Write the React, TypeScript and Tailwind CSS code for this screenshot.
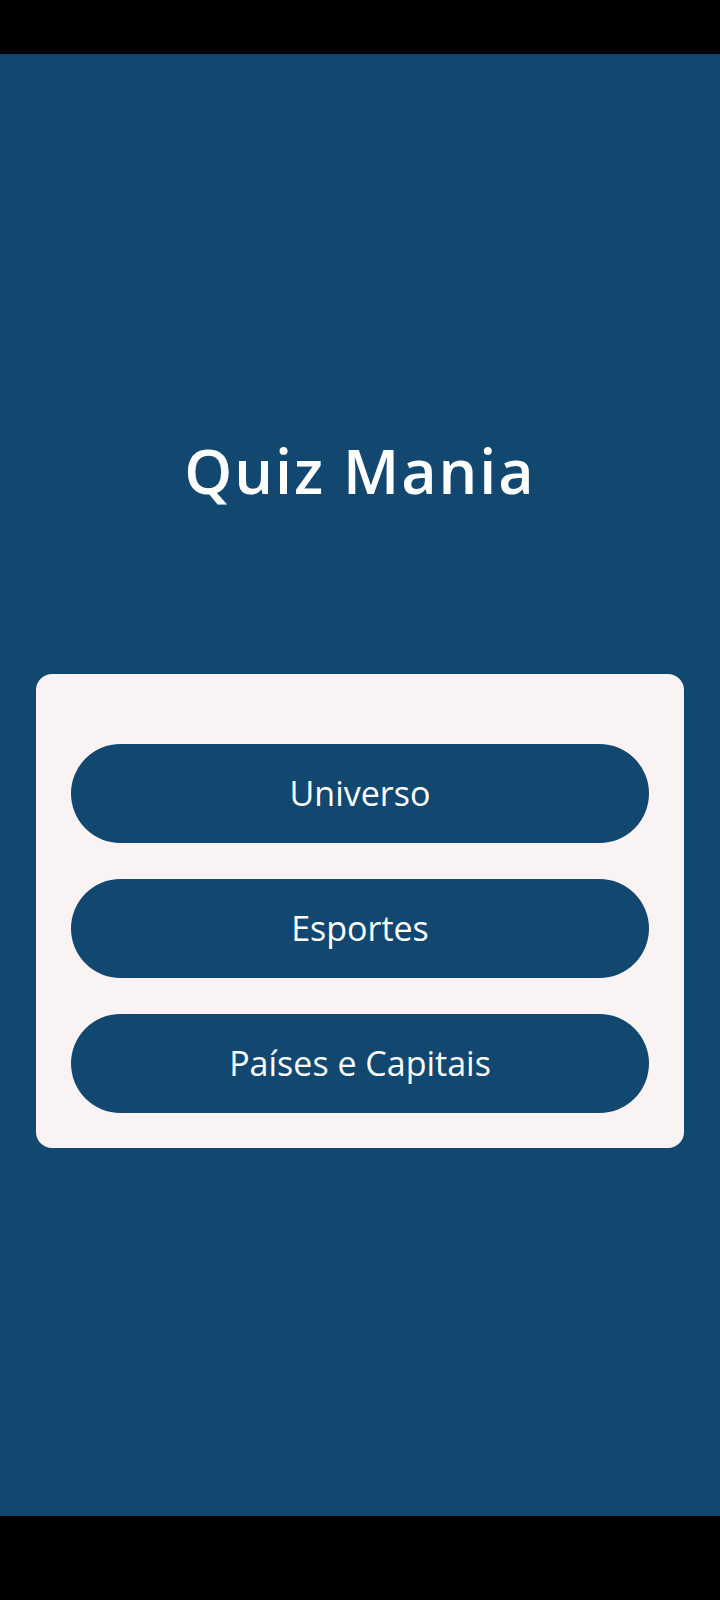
const categories = ['Universo', 'Esportes', 'Países e Capitais'];

export default function App() {
  return (
    <div className="w-[720px] h-[1600px] flex flex-col bg-black" style={{ fontFamily: '"Open Sans", sans-serif' }}>
      <div className="h-[54px] bg-black" />

      <main className="h-[1462px] bg-[#12476f] flex flex-col items-center">
        <h1 className="mt-[386px] text-[61px] leading-[61px] font-semibold tracking-[2px] text-white">Quiz Mania</h1>

        <div className="mt-[173px] w-[648px] rounded-2xl bg-[#f9f3f3] px-[35px] pt-[70px] pb-[35px] flex flex-col gap-[36px]">
          {categories.map((name) => (
            <button
              key={name}
              className="h-[99px] w-full rounded-full bg-[#12476f] text-white text-[34px] flex items-center justify-center"
            >
              {name}
            </button>
          ))}
        </div>
      </main>

      <div className="flex-1 bg-black" />
    </div>
  );
}
